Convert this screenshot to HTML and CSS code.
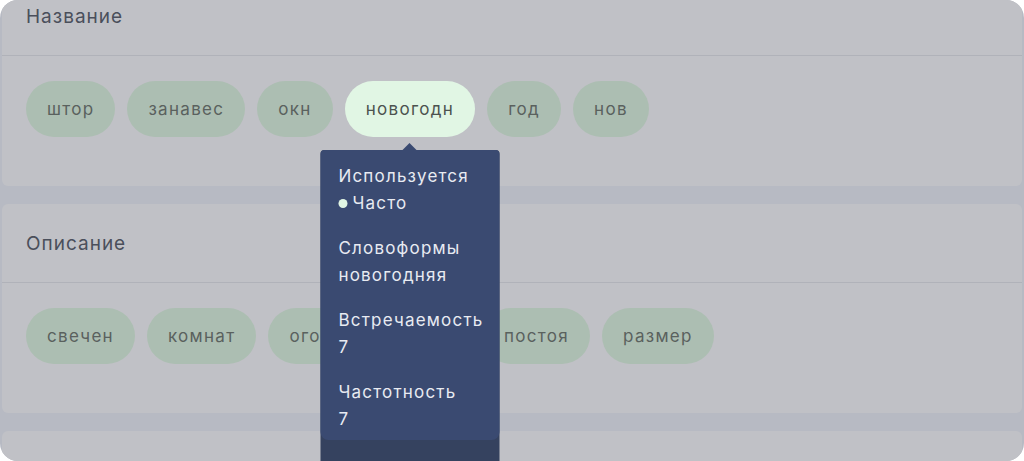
FILE: index.html
```html
<!DOCTYPE html>
<html lang="ru">
<head>
    <meta charset="UTF-8">
    <meta name="viewport" content="width=device-width, initial-scale=1.0">
    <title>Ключевые слова</title>
    <link rel="stylesheet" href="styles.css">
</head>
<body>
    <div class="frame">
        <div class="fields">
            <section class="field">
                <div class="field-head">Название</div>
                <div class="chips">
                    <span class="chip">штор</span>
                    <span class="chip">занавес</span>
                    <span class="chip">окн</span>
                    <span class="chip chip-active">новогодн
                        <div class="tip">
                            <div class="tip-body">
                                <div class="tip-group">
                                    <div>Используется</div>
                                    <div><span class="dot"></span>Часто</div>
                                </div>
                                <div class="tip-group">
                                    <div>Словоформы</div>
                                    <div>новогодняя</div>
                                </div>
                                <div class="tip-group">
                                    <div>Встречаемость</div>
                                    <div>7</div>
                                </div>
                                <div class="tip-group">
                                    <div>Частотность</div>
                                    <div>7</div>
                                </div>
                            </div>
                        </div>
                    </span>
                    <span class="chip">год</span>
                    <span class="chip">нов</span>
                </div>
            </section>

            <section class="field">
                <div class="field-head">Описание</div>
                <div class="chips">
                    <span class="chip">свечен</span>
                    <span class="chip">комнат</span>
                    <span class="chip">огоньк</span>
                    <span class="chip">тёпл</span>
                    <span class="chip">постоя</span>
                    <span class="chip">размер</span>
                </div>
            </section>

            <section class="field">
                <div class="field-head"></div>
            </section>
        </div>
    </div>
</body>
</html>
```

FILE: styles.css
```css
* { margin: 0; padding: 0; box-sizing: border-box; }

body {
    background: #ffffff;
    font-family: 'Inter', 'Noto Sans', sans-serif;
}

.frame {
    width: 1024px;
    height: 461px;
    border-radius: 18px;
    overflow: hidden;
    background: #b7bac3;
}

/* list is scrolled a little, first card starts above the frame */
.fields {
    margin-top: -23px;
    display: flex;
    flex-direction: column;
    gap: 18px;
}

.field {
    background: #c0c1c6;
    margin: 0 2px;
    border-radius: 6px;
}

.field-head {
    height: 79px;
    display: flex;
    align-items: center;
    padding-left: 24px;
    border-bottom: 1px solid #b0b2b9;
    font-size: 19px;
    letter-spacing: 1px;
    color: #4a4f5b;
}

.chips {
    display: flex;
    gap: 12px;
    padding: 25px 24px 49px;
}

.chip {
    position: relative;
    height: 56px;
    line-height: 56px;
    padding: 0 21px;
    border-radius: 28px;
    background: #acbeb2;
    color: #5a615e;
    font-size: 17px;
    letter-spacing: 1.3px;
    white-space: nowrap;
}

.chip-active {
    background: #e1f6e4;
    color: #4c524f;
}

.tip {
    position: absolute;
    top: 69px;
    left: 50%;
    transform: translateX(-50%);
    width: 179px;
    padding-bottom: 40px;
    background: #35425f;
    border-radius: 4px;
    z-index: 5;
    white-space: normal;
    letter-spacing: 1.2px;
}

.tip::before {
    content: '';
    position: absolute;
    top: -7px;
    left: 50%;
    margin-left: -7px;
    border-left: 7px solid transparent;
    border-right: 7px solid transparent;
    border-bottom: 7px solid #3a4a71;
}

.tip-body {
    background: #3a4a71;
    border-radius: 4px 4px 8px 8px;
    padding: 13px 18px 7px;
    display: flex;
    flex-direction: column;
    gap: 18px;
    color: #e8ebf2;
    font-size: 17px;
    line-height: 27px;
}

.dot {
    display: inline-block;
    width: 9px;
    height: 9px;
    border-radius: 50%;
    background: #e1f6e4;
    margin-right: 5px;
    vertical-align: 1px;
}
```
